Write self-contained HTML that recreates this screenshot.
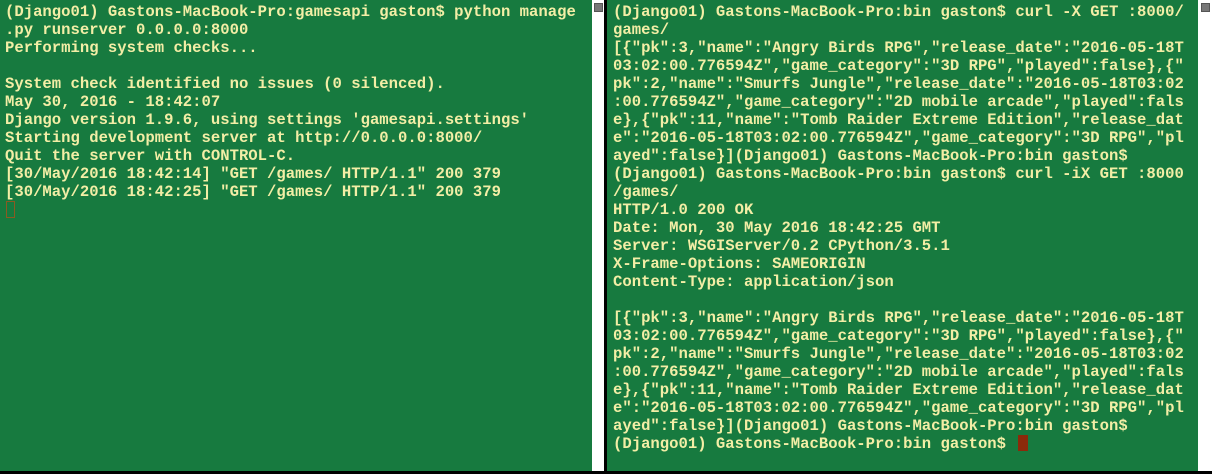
<!DOCTYPE html>
<html><head><meta charset="utf-8"><style>
body{margin:0;width:1212px;height:474px;background:#fff;position:relative;overflow:hidden}
.p{position:absolute;top:0;height:471px;background:#177a3f}
.t{position:absolute;margin:0;font:bold 15.6px/18px "Liberation Mono",monospace;color:#f3eea6;white-space:pre}
.sb{position:absolute;top:3px;width:9px;height:9px;background:#777;border:1px solid #555;box-sizing:border-box}
</style></head><body>
<div class="p" style="left:0;width:592px"></div>
<div style="position:absolute;left:604px;top:0;width:3px;height:474px;background:#000"></div>
<div class="p" style="left:607px;width:591px"></div>
<div style="position:absolute;left:0;top:471px;width:1212px;height:3px;background:#000"></div>
<div class="sb" style="left:594px"></div>
<div class="sb" style="left:1201px"></div>
<pre class="t" style="left:5px;top:3px">(Django01) Gastons-MacBook-Pro:gamesapi gaston$ python manage
.py runserver 0.0.0.0:8000
Performing system checks...

System check identified no issues (0 silenced).
May 30, 2016 - 18:42:07
Django version 1.9.6, using settings 'gamesapi.settings'
Starting development server at http://0.0.0.0:8000/
Quit the server with CONTROL-C.
[30/May/2016 18:42:14] "GET /games/ HTTP/1.1" 200 379
[30/May/2016 18:42:25] "GET /games/ HTTP/1.1" 200 379</pre>
<div style="position:absolute;left:6px;top:201px;width:9px;height:17px;border:1px solid #8a5a22;box-sizing:border-box"></div>
<pre class="t" style="left:613px;top:3px">(Django01) Gastons-MacBook-Pro:bin gaston$ curl -X GET :8000/
games/
[{"pk":3,"name":"Angry Birds RPG","release_date":"2016-05-18T
03:02:00.776594Z","game_category":"3D RPG","played":false},{"
pk":2,"name":"Smurfs Jungle","release_date":"2016-05-18T03:02
:00.776594Z","game_category":"2D mobile arcade","played":fals
e},{"pk":11,"name":"Tomb Raider Extreme Edition","release_dat
e":"2016-05-18T03:02:00.776594Z","game_category":"3D RPG","pl
ayed":false}](Django01) Gastons-MacBook-Pro:bin gaston$
(Django01) Gastons-MacBook-Pro:bin gaston$ curl -iX GET :8000
/games/
HTTP/1.0 200 OK
Date: Mon, 30 May 2016 18:42:25 GMT
Server: WSGIServer/0.2 CPython/3.5.1
X-Frame-Options: SAMEORIGIN
Content-Type: application/json

[{"pk":3,"name":"Angry Birds RPG","release_date":"2016-05-18T
03:02:00.776594Z","game_category":"3D RPG","played":false},{"
pk":2,"name":"Smurfs Jungle","release_date":"2016-05-18T03:02
:00.776594Z","game_category":"2D mobile arcade","played":fals
e},{"pk":11,"name":"Tomb Raider Extreme Edition","release_dat
e":"2016-05-18T03:02:00.776594Z","game_category":"3D RPG","pl
ayed":false}](Django01) Gastons-MacBook-Pro:bin gaston$
(Django01) Gastons-MacBook-Pro:bin gaston$ </pre>
<div style="position:absolute;left:1018px;top:435px;width:10px;height:16px;background:#8b2a0a"></div>
</body></html>
